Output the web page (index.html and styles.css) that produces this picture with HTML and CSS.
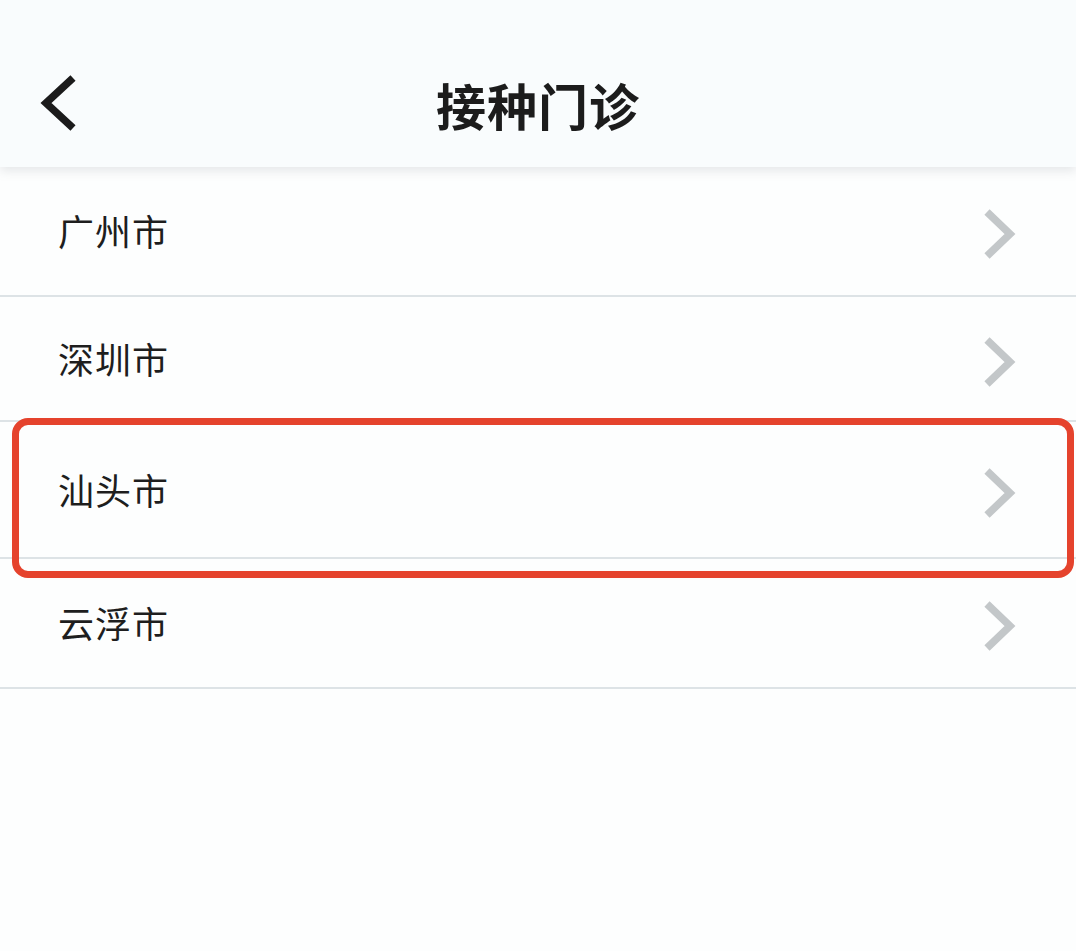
FILE: index.html
```html
<!DOCTYPE html>
<html lang="zh-CN">
<head>
<meta charset="utf-8">
<title>接种门诊</title>
<link rel="stylesheet" href="styles.css">
</head>
<body>
<header class="topbar">
  <button class="back" aria-label="返回">
    <svg width="40" height="60" viewBox="0 0 40 60"><polyline points="33,4 6,29 33,54" fill="none" stroke="#1b1b1b" stroke-width="7.5" stroke-linecap="butt" stroke-linejoin="miter"/></svg>
  </button>
  <h1 class="title">接种门诊</h1>
</header>
<ul class="list">
  <li class="row"><span class="name">广州市</span><svg class="chev" width="40" height="54" viewBox="0 0 40 54"><polyline points="7,4 30,26 7,48" fill="none" stroke="#c3c7c9" stroke-width="7.5"/></svg></li>
  <li class="row row-short"><span class="name">深圳市</span><svg class="chev" width="40" height="54" viewBox="0 0 40 54"><polyline points="7,4 30,26 7,48" fill="none" stroke="#c3c7c9" stroke-width="7.5"/></svg></li>
  <li class="row selected"><span class="name">汕头市</span><svg class="chev" width="40" height="54" viewBox="0 0 40 54"><polyline points="7,4 30,26 7,48" fill="none" stroke="#c3c7c9" stroke-width="7.5"/></svg><span class="highlight"></span></li>
  <li class="row"><span class="name">云浮市</span><svg class="chev" width="40" height="54" viewBox="0 0 40 54"><polyline points="7,4 30,26 7,48" fill="none" stroke="#c3c7c9" stroke-width="7.5"/></svg></li>
</ul>
</body>
</html>
```
FILE: styles.css
```css
html, body {
  margin: 0;
  padding: 0;
  background: #fdfefe;
  font-family: "Noto Sans CJK SC", "Noto Sans", sans-serif;
}
.topbar {
  position: relative;
  z-index: 2;
  height: 167px;
  background: #f9fcfd;
  display: flex;
  align-items: center;
  justify-content: center;
  box-shadow: 0 4px 10px rgba(120, 130, 140, 0.18);
}
.back {
  position: absolute;
  left: 40px;
  top: 74px;
  padding: 0;
  border: 0;
  background: none;
  width: 40px;
  height: 60px;
}
.back svg { display: block; }
.title {
  margin: 0;
  margin-top: 41px;
  font-size: 50px;
  font-weight: 700;
  color: #1c1c1c;
  letter-spacing: 1px;
  line-height: 1;
}
.list {
  list-style: none;
  margin: 0;
  padding: 0;
}
.row {
  position: relative;
  height: 128px;
  display: flex;
  align-items: center;
  justify-content: space-between;
  padding: 0 56px 0 58px;
  border-bottom: 2px solid #dde3e6;
  background: #fdfefe;
}
.row-short {
  height: 123px;
}
.name {
  font-size: 36px;
  color: #1e1e1e;
  letter-spacing: 1px;
  margin-top: -2px;
}
.chev {
  display: block;
  margin-top: 8px;
}
.selected {
  height: 135px;
}
.highlight {
  position: absolute;
  z-index: 3;
  left: 12px;
  right: 2px;
  top: -4px;
  bottom: -21px;
  border: 7px solid #e5432d;
  border-radius: 16px;
  pointer-events: none;
}
```
